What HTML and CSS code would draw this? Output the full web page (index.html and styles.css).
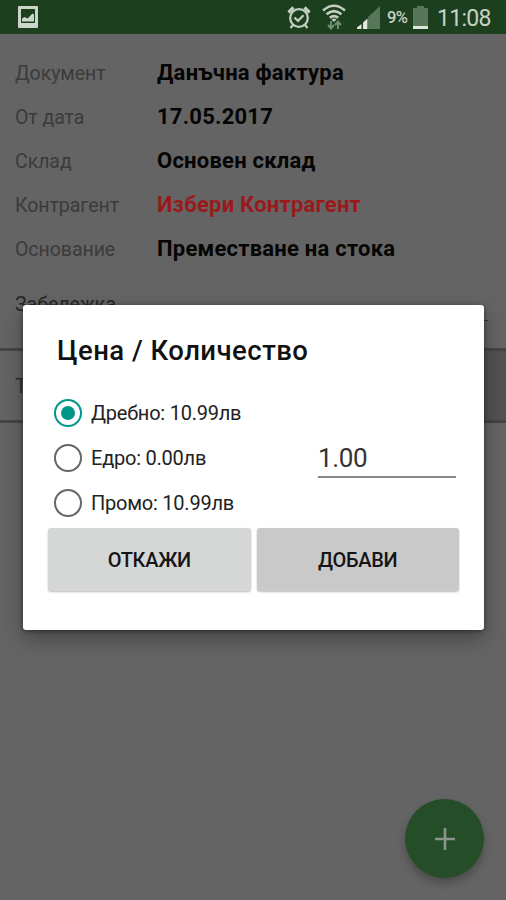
FILE: index.html
```html
<!DOCTYPE html>
<html lang="bg">
<head>
<meta charset="utf-8">
<title>Цена / Количество</title>
<link rel="stylesheet" href="styles.css">
</head>
<body>
<div class="screen">
  <header class="status">
    <svg class="picture" width="20" height="22" viewBox="0 0 20 22"><path fill="#cbd5ca" fill-rule="evenodd" d="M1 0h18q1 0 1 1v20q0 1-1 1H1q-1 0-1-1V1q0-1 1-1zM3 3v14h14V3z"/><path fill="#cbd5ca" d="M4 15.500v-3l2.500-1.500 3 1.500 5-5 1.500 1v7z"/></svg>
    <svg class="alarm" width="24" height="24" viewBox="0 0 24 24" fill="none" stroke="#c2cec1" stroke-width="2.3"><circle cx="12" cy="12" r="8.8"/><path d="M7.500 11.500l3.500 3.300 5.500-5.500M6 19l-2.500 3M18 19l2.500 3"/><path stroke-width="3.200" d="M1.500 6.500l5-5M22.500 6.500l-5-5"/></svg>
    <svg class="wifi" width="24" height="26" viewBox="0 0 24 26" fill="none"><g stroke="#c2cec1" stroke-width="2.600"><path d="M1 6.500Q12-3 23 6.500"/><path d="M4.500 10.300Q12 3.800 19.500 10.300"/><path d="M7.800 13.800Q12 10.300 16.200 13.800"/></g><path fill="#c2cec1" d="M9.500 15.500Q12 13.500 14.500 15.500L12 18z"/><path stroke="#6f8d70" stroke-width="2" d="M9 17v7M6 21l3 3.500 3-3.500M16 25v-7M13 21l3-3.500 3 3.500"/></svg>
    <svg class="signal" width="23" height="23" viewBox="0 0 23 23"><path fill="#587758" d="M11 11L23 0v23H11z"/><path fill="#e0e8df" d="M0 23v-1.500l4.500-3.500v5zM6 23v-6.500l4.500-4v10.500z"/></svg>
    <span class="percent">9%</span>
    <svg class="battery" width="15" height="23" viewBox="0 0 15 23"><path fill="#587758" d="M4 0h7v2h4v18H0V2h4z"/><path fill="#dce5db" d="M0 20h15v3H0z"/></svg>
    <span class="clock">11:08</span>
  </header>
  <main class="document">
    <dl class="fields">
      <div class="field"><dt>Документ</dt><dd>Данъчна фактура</dd></div>
      <div class="field"><dt>От дата</dt><dd>17.05.2017</dd></div>
      <div class="field"><dt>Склад</dt><dd>Основен склад</dd></div>
      <div class="field"><dt>Контрагент</dt><dd class="missing">Избери Контрагент</dd></div>
      <div class="field"><dt>Основание</dt><dd>Преместване на стока</dd></div>
    </dl>
    <div class="note"><span>Забележка</span><i></i></div>
    <div class="search"><span>Търси</span><b></b></div>
  </main>
  <section class="dialog">
    <h1>Цена / Количество</h1>
    <div class="body">
      <div class="options">
        <div class="option"><span class="radio checked"></span><span class="label">Дребно: 10.99лв</span></div>
        <div class="option"><span class="radio"></span><span class="label">Едро: 0.00лв</span></div>
        <div class="option"><span class="radio"></span><span class="label">Промо: 10.99лв</span></div>
      </div>
      <div class="quantity">1.00</div>
    </div>
    <div class="actions"><button class="cancel">ОТКАЖИ</button><button class="add">ДОБАВИ</button></div>
  </section>
  <button class="fab" aria-label="Добави"><svg width="20" height="22" viewBox="0 0 20 22"><path d="M10 0v22M0 11h20" stroke="#8b948c" stroke-width="2.600"/></svg></button>
</div>
</body>
</html>
```
FILE: styles.css
```css
* { box-sizing: border-box; }
body { margin: 0; font-family: Roboto, "Noto Sans", sans-serif; }
button { border: 0; padding: 0; font-family: inherit; }
.screen { position: relative; width: 506px; height: 900px; overflow: hidden; background: #646464; }
.status { display: flex; align-items: flex-start; height: 34px; padding: 6px 0 0 18px; background: #1c3f1e; color: #c7d2c6; }
.status svg { flex: none; }
.alarm { margin-left: 249px; }
.wifi { margin: -2px 0 0 11px; }
.signal { margin-left: 11px; }
.percent { width: 23px; margin-left: 7px; font-size: 16.5px; font-weight: 500; line-height: 24px; letter-spacing: -.6px; }
.battery { margin-left: 3px; }
.clock { margin-left: 9px; font-size: 23px; line-height: 26px; letter-spacing: -.7px; }
.fields { margin: 0; padding: 17px 0 0 15px; }
.field { display: flex; height: 44px; line-height: 44px; white-space: nowrap; }
dt { width: 142px; padding-top: 1px; color: #3b3b3b; font-size: 19.5px; font-weight: 400; letter-spacing: -.05px; }
dd { margin: 0; color: #050505; font-size: 22px; font-weight: 700; letter-spacing: .23px; }
.missing { color: #9a1a1c; }
.note { display: flex; height: 80px; padding: 22px 18px 0 15px; justify-content: space-between; color: #262626; font-size: 19.5px; line-height: 24px; border-bottom: 3px solid #444; }
.note i { width: 350px; height: 28px; border-bottom: 1px solid #333; }
.search { display: flex; justify-content: space-between; height: 72px; padding-left: 15px; border-bottom: 3px solid #444; color: #303030; font-size: 20px; line-height: 71px; }
.search b { width: 72px; background: #525252; }
.dialog { position: absolute; left: 23px; top: 305px; width: 461px; height: 325px; padding: 29px 25px 0; background: #fff; border-radius: 3px; box-shadow: 0 8px 20px #0005, 0 1px 4px #0006; }
h1 { margin: 0 0 22px 9px; color: #111; font-size: 27.5px; font-weight: 500; line-height: 34px; letter-spacing: .47px; white-space: nowrap; }
.body { display: flex; justify-content: space-between; height: 138px; }
.options { padding-left: 6px; }
.option { display: flex; align-items: center; gap: 9px; height: 45px; color: #222; font-size: 20px; line-height: 43px; letter-spacing: -.23px; white-space: nowrap; }
.label { padding-top: 2px; }
.radio { width: 28px; height: 28px; border: 2.5px solid #666; border-radius: 50%; }
.checked { display: grid; place-items: center; border-color: #009688; }
.checked::after { content: ""; width: 14px; height: 14px; border-radius: 50%; background: #009688; }
.quantity { width: 138px; height: 35px; margin: 53px 3px 0 0; border-bottom: 2px solid #888; color: #333; font-size: 26px; line-height: 30px; letter-spacing: -.4px; }
.actions { display: flex; gap: 6px; }
.actions button { width: 203px; height: 63px; border-radius: 3px; background: #d5d7d6; color: #151515; font-size: 20px; font-weight: 500; letter-spacing: -.3px; box-shadow: 0 1px 2px #0004; }
.actions .add { background: #c9c9c9; }
.fab { position: absolute; left: 405px; top: 799px; display: grid; place-items: center; width: 79px; height: 79px; border-radius: 50%; background: #254e28; box-shadow: 0 5px 9px #0004; }
```
